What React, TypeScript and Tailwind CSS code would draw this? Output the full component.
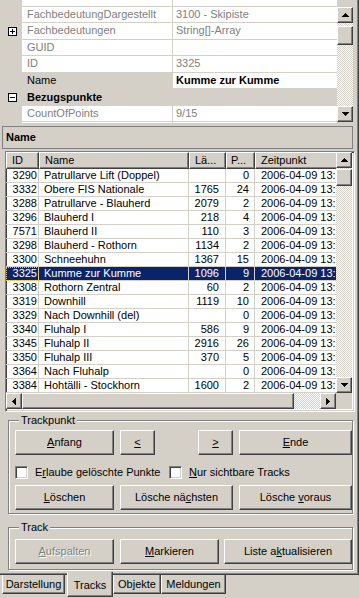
import React from "react";

const raised =
  "bg-[#d4d0c8] border border-t-white border-l-white border-r-[#404040] border-b-[#404040] shadow-[inset_-1px_-1px_0_#808080]";
const sunken =
  "border border-t-[#808080] border-l-[#808080] border-r-white border-b-white shadow-[inset_1px_1px_0_#404040,inset_-1px_-1px_0_#d4d0c8]";
const track =
  "bg-[repeating-conic-gradient(#ffffff_0%_25%,#d4d0c8_0%_50%)] bg-[length:2px_2px]";
const etched = "border border-[#808080] shadow-[inset_1px_1px_0_#ffffff,1px_1px_0_#ffffff]";

const props = [
  { name: "FachbedeutungDargestellt", value: "3100 - Skipiste" },
  { name: "Fachbedeutungen", value: "String[]-Array", plus: true },
  { name: "GUID", value: "" },
  { name: "ID", value: "3325" },
  { name: "Name", value: "Kumme zur Kumme", selected: true },
  { name: "Bezugspunkte", category: true },
  { name: "CountOfPoints", value: "9/15" },
];

const tracks = [
  ["3290", "Patrullarve Lift (Doppel)", "", "0"],
  ["3332", "Obere FIS Nationale", "1765", "24"],
  ["3288", "Patrullarve - Blauherd", "2079", "2"],
  ["3296", "Blauherd I", "218", "4"],
  ["7571", "Blauherd II", "110", "3"],
  ["3298", "Blauherd - Rothorn", "1134", "2"],
  ["3300", "Schneehuhn", "1367", "15"],
  ["3325", "Kumme zur Kumme", "1096", "9"],
  ["3308", "Rothorn Zentral", "60", "2"],
  ["3319", "Downhill", "1119", "10"],
  ["3329", "Nach Downhill (del)", "", "0"],
  ["3340", "Fluhalp I", "586", "9"],
  ["3345", "Fluhalp II", "2916", "26"],
  ["3350", "Fluhalp III", "370", "5"],
  ["3364", "Nach Fluhalp", "", "0"],
  ["3384", "Hohtälli - Stockhorn", "1600", "2"],
];

function Arrow({ dir }: { dir: "up" | "down" | "left" | "right" }) {
  if (dir === "up" || dir === "down") {
    const rows = dir === "up" ? [0, 1, 2, 3] : [3, 2, 1, 0];
    return (
      <svg width="7" height="4" shapeRendering="crispEdges">
        {rows.map((r, i) => (
          <rect key={i} x={3 - r} y={i} width={r * 2 + 1} height={1} fill="#000" />
        ))}
      </svg>
    );
  }
  const cols = dir === "left" ? [0, 1, 2, 3] : [3, 2, 1, 0];
  return (
    <svg width="4" height="7" shapeRendering="crispEdges">
      {cols.map((c, i) => (
        <rect key={i} x={i} y={3 - c} width={1} height={c * 2 + 1} fill="#000" />
      ))}
    </svg>
  );
}

function SBtn({ dir }: { dir: "up" | "down" | "left" | "right" }) {
  return (
    <div className={`${raised} w-[16px] h-[16px] shrink-0 flex items-center justify-center`}>
      <Arrow dir={dir} />
    </div>
  );
}

function Box({ sign }: { sign: "+" | "-" }) {
  return (
    <svg width="9" height="9" shapeRendering="crispEdges">
      <rect x="0.5" y="0.5" width="8" height="8" fill="#fff" stroke="#000" />
      <rect x="2" y="4" width="5" height="1" fill="#000" />
      {sign === "+" && <rect x="4" y="2" width="1" height="5" fill="#000" />}
    </svg>
  );
}

function Btn({
  children,
  className,
  disabled,
}: {
  children: React.ReactNode;
  className: string;
  disabled?: boolean;
}) {
  return (
    <div
      className={`${raised} ${className} shrink-0 flex items-center justify-center ${
        disabled ? "text-[#808080] [text-shadow:1px_1px_0_#ffffff]" : ""
      }`}
    >
      <span>{children}</span>
    </div>
  );
}

function Check({ label, className }: { label: React.ReactNode; className: string }) {
  return (
    <div className={`flex items-center ${className}`}>
      <div className={`${sunken} w-[13px] h-[13px] bg-white shrink-0`} />
      <span className="ml-[7px] whitespace-nowrap">{label}</span>
    </div>
  );
}

function PropertyGrid() {
  return (
    <div className="flex h-[123px] w-[353px] shrink-0 overflow-hidden">
      <div className="flex flex-col w-[337px]">
        <div className="flex h-[6.5px] shrink-0">
          <div className="w-[22px]" />
          <div className="w-[151px] bg-white border-r border-b border-[#d4d0c8]" />
          <div className="flex-1 bg-white border-b border-[#d4d0c8]" />
        </div>
        {props.map((p) =>
          p.category ? (
            <div key={p.name} className="flex h-[16.5px] shrink-0 items-center">
              <div className="w-[22px] flex items-center pl-[8px]">
                <Box sign="-" />
              </div>
              <span className="pl-[5px] font-bold">{p.name}</span>
            </div>
          ) : (
            <div key={p.name} className="flex h-[16.5px] shrink-0">
              <div className="w-[22px] flex items-center pl-[8px]">
                {p.plus && <Box sign="+" />}
              </div>
              <div
                className={`w-[151px] flex items-center pl-[5px] border-r border-b border-[#d4d0c8] ${
                  p.selected ? "bg-[#d4d0c8] text-black" : "bg-white text-[#808080]"
                }`}
              >
                {p.name}
              </div>
              <div
                className={`flex-1 flex items-center pl-[3px] bg-white border-b border-[#d4d0c8] whitespace-nowrap ${
                  p.selected ? "font-bold text-black" : "text-[#808080]"
                }`}
              >
                {p.value}
              </div>
            </div>
          )
        )}
        <div className="flex h-[4px] shrink-0">
          <div className="w-[22px]" />
          <div className="w-[151px] bg-white border-r border-[#d4d0c8]" />
          <div className="flex-1 bg-white" />
        </div>
      </div>
      <div className="w-[16px] flex flex-col">
        <div className="h-[7px] shrink-0" />
        <SBtn dir="up" />
        <div className={`h-[3px] shrink-0 ${track}`} />
        <div className={`${raised} h-[19px] shrink-0`} />
        <div className={`h-[61px] shrink-0 ${track}`} />
        <SBtn dir="down" />
      </div>
    </div>
  );
}

function ListView() {
  return (
    <div className={`${sunken} mt-[2px] ml-[5px] w-[350px] h-[261px] shrink-0 bg-white flex flex-col`}>
      <div className="flex h-[241px]">
        <div className="w-[330px] overflow-hidden flex flex-col">
          <div className="flex h-[17px] shrink-0">
            <div className={`${raised} w-[33px] shrink-0 flex items-center pl-[5px]`}>ID</div>
            <div className={`${raised} w-[150px] shrink-0 flex items-center pl-[5px]`}>Name</div>
            <div className={`${raised} w-[37px] shrink-0 flex items-center pl-[5px]`}>Lä...</div>
            <div className={`${raised} w-[29px] shrink-0 flex items-center pl-[4px]`}>P...</div>
            <div className={`${raised} w-[120px] shrink-0 flex items-center pl-[5px]`}>Zeitpunkt</div>
          </div>
          {tracks.map(([id, name, len, pts]) => {
            const sel = id === "3325";
            const cell = `h-[14px] shrink-0 flex items-center border-r border-b border-[#d4d0c8] whitespace-nowrap overflow-hidden`;
            return (
              <div key={id} className={`flex ${sel ? "bg-[#0a246a] text-white" : "text-black"}`}>
                <div className={`${cell} w-[33px] justify-end pr-[1px] ${sel ? "outline outline-dotted outline-[#f0c060] -outline-offset-1" : ""}`}>
                  {id}
                </div>
                <div className={`${cell} w-[150px] pl-[5px]`}>{name}</div>
                <div className={`${cell} w-[37px] justify-end pr-[6px]`}>{len}</div>
                <div className={`${cell} w-[29px] justify-end pr-[5px]`}>{pts}</div>
                <div className={`${cell} w-[120px] pl-[6px]`}>2006-04-09 13:15:00</div>
              </div>
            );
          })}
        </div>
        <div className="w-[16px] flex flex-col">
          <SBtn dir="up" />
          <div className={`h-[1px] shrink-0 ${track}`} />
          <div className={`${raised} h-[17px] shrink-0`} />
          <div className={`flex-1 ${track}`} />
          <SBtn dir="down" />
        </div>
      </div>
      <div className="flex h-[16px]">
        <SBtn dir="left" />
        <div className={`${raised} w-[272px] shrink-0`} />
        <div className={`w-[26px] shrink-0 ${track}`} />
        <SBtn dir="right" />
        <div className="w-[16px] bg-[#d4d0c8]" />
      </div>
    </div>
  );
}

function Group({
  title,
  className,
  children,
}: {
  title: string;
  className: string;
  children: React.ReactNode;
}) {
  return (
    <div className={`${etched} relative ml-[8px] w-[345px] shrink-0 ${className}`}>
      <span className="absolute left-[10px] top-[-7px] px-[2px] bg-[#d4d0c8] leading-[13px]">
        {title}
      </span>
      {children}
    </div>
  );
}

export default function App() {
  return (
    <div className="w-[359px] h-[598px] overflow-hidden bg-[#d4d0c8] font-['Liberation_Sans',Arial,sans-serif] text-[11px] leading-none text-black select-none">
      <div className="h-[575px] flex flex-col border-r border-b border-r-[#404040] border-b-[#404040] shadow-[inset_-1px_-1px_0_#808080]">
        <PropertyGrid />

        <div className="mt-[3px] ml-[2px] w-[351px] h-[23px] shrink-0 border border-[#808080] flex items-center pl-[3px] font-bold">
          Name
        </div>

        <ListView />

        <Group title="Trackpunkt" className="mt-[8px] h-[94px] pt-[9px] pl-[6px]">
          <div className="flex h-[25px]">
            <Btn className="w-[99px]">
              <u>A</u>nfang
            </Btn>
            <Btn className="w-[35px] ml-[6px]">
              <u>&lt;</u>
            </Btn>
            <Btn className="w-[35px] ml-[43px]">
              <u>&gt;</u>
            </Btn>
            <Btn className="w-[113px] ml-[6px]">
              <u>E</u>nde
            </Btn>
          </div>
          <div className="flex h-[13px] mt-[11px]">
            <Check
              className="w-[154px]"
              label={
                <>
                  E<u>r</u>laube gelöschte Punkte
                </>
              }
            />
            <Check
              className=""
              label={
                <>
                  <u>N</u>ur sichtbare Tracks
                </>
              }
            />
          </div>
          <div className="flex h-[25px] mt-[6px]">
            <Btn className="w-[99px]">
              <u>L</u>öschen
            </Btn>
            <Btn className="w-[113px] ml-[6px]">
              Lösche nä<u>c</u>hsten
            </Btn>
            <Btn className="w-[113px] ml-[6px]">
              Lösche <u>v</u>oraus
            </Btn>
          </div>
        </Group>

        <Group title="Track" className="mt-[13px] h-[43px] pt-[11px] pl-[6px]">
          <div className="flex h-[25px]">
            <Btn className="w-[99px]" disabled>
              <u>A</u>ufspalten
            </Btn>
            <Btn className="w-[99px] ml-[6px]">
              <u>M</u>arkieren
            </Btn>
            <Btn className="w-[128px] ml-[5px]">
              Liste a<u>k</u>tualisieren
            </Btn>
          </div>
        </Group>
      </div>

      <div className="flex items-start pl-[2px] h-[23px]">
        <div className="w-[63px] h-[19px] shrink-0 flex items-center justify-center border-l border-l-white border-r border-r-[#404040] border-b border-b-[#404040] shadow-[inset_-1px_-1px_0_#808080]">
          Darstellung
        </div>
        <div className="relative z-10 -mt-[3px] ml-[2px] w-[46px] h-[25px] shrink-0 flex items-center justify-center pt-[3px] bg-[#d4d0c8] border-l border-l-white border-r border-r-[#404040] border-b border-b-[#404040] shadow-[inset_-1px_-1px_0_#808080]">
          Tracks
        </div>
        <div className="w-[48px] h-[19px] shrink-0 flex items-center justify-center border-l border-l-white border-r border-r-[#404040] border-b border-b-[#404040] shadow-[inset_-1px_-1px_0_#808080]">
          Objekte
        </div>
        <div className="w-[65px] h-[19px] shrink-0 flex items-center justify-center border-l border-l-white border-r border-r-[#404040] border-b border-b-[#404040] shadow-[inset_-1px_-1px_0_#808080]">
          Meldungen
        </div>
      </div>
    </div>
  );
}
